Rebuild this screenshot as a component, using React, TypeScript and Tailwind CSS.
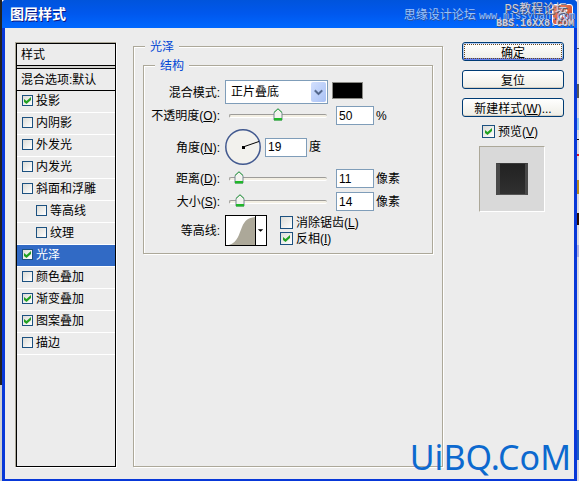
import { useState } from 'react'
import type { ReactNode } from 'react'
import { FaChevronDown } from 'react-icons/fa'

const styles = [
  { name: '投影', on: true },
  { name: '内阴影', on: false },
  { name: '外发光', on: false },
  { name: '内发光', on: false },
  { name: '斜面和浮雕', on: false },
  { name: '等高线', on: false, sub: true },
  { name: '纹理', on: false, sub: true },
  { name: '光泽', on: true },
  { name: '颜色叠加', on: false },
  { name: '渐变叠加', on: true },
  { name: '图案叠加', on: true },
  { name: '描边', on: false },
]

const groupBox =
  'min-w-0 border border-[#aca899] shadow-[1px_1px_0_#fff,inset_1px_1px_0_#fff]'
const legendText = 'h-[14px] bg-[#ececec] px-[5px] leading-[17px] text-[#0046d5]'

function CheckBox({ id, checked, onChange, small }: { id: string; checked: boolean; onChange: () => void; small?: boolean }) {
  return (
    <span className={small ? 'relative block size-[11px] shrink-0' : 'relative block size-[13px] shrink-0'}>
      <input
        type="checkbox"
        id={id}
        checked={checked}
        onChange={onChange}
        className="block size-full appearance-none border border-[#1c5180] bg-linear-to-br from-[#dcdcd7] to-white"
      />
      {checked && (
        <svg className="pointer-events-none absolute inset-0 m-auto size-[7px]" viewBox="0 0 7 7">
          <path d="M0 2v3l2.500 2L7 3V0L2.500 4z" fill="#21a121" />
        </svg>
      )}
    </span>
  )
}

function Row({ id, label, hotkey, className, children }: { id: string; label: string; hotkey?: string; className: string; children: ReactNode }) {
  return (
    <div className={`flex items-center ${className}`}>
      <label htmlFor={id} className="mr-[5px] w-[76px] shrink-0 pt-px text-right whitespace-nowrap">
        {label}
        {hotkey && <>(<u>{hotkey}</u>)</>}:
      </label>
      {children}
    </div>
  )
}

function NumberBox({ id, value, onChange }: { id: string; value: number; onChange: (v: number) => void }) {
  return (
    <input
      type="text"
      id={id}
      value={value}
      onChange={(e) => onChange(Number(e.target.value) || 0)}
      className="h-[19px] w-[38px] shrink-0 border border-[#7f9db9] bg-white px-[2px]"
    />
  )
}

function Slider({ label, value, max, onChange }: { label: string; value: number; max: number; onChange: (v: number) => void }) {
  return (
    <div className="relative ml-[4px] mr-[9px] h-[13px] w-[98px] shrink-0">
      <div className="mt-[5px] h-[4px] rounded-sm border-t border-l border-[#9d9c99] border-b border-b-white bg-[#f3efe3]" />
      <input
        type="range"
        aria-label={label}
        min={0}
        max={max}
        value={value}
        onChange={(e) => onChange(Number(e.target.value))}
        className="absolute inset-0 w-full opacity-0"
      />
      <div className="pointer-events-none absolute inset-x-[5px] -top-px">
        <svg
          className="-ml-[5px] h-[13px] w-[10px]"
          style={{ position: 'relative', left: `${(value / max) * 100}%` }}
          viewBox="0 0 10 13"
        >
          <path d="M1 12V4.500L5 .8l4 3.700V12z" fill="#f3f3ef" stroke="#778892" />
          <path d="M1 4.500 5 .8l4 3.700" fill="none" stroke="#37ac49" />
          <path d="M1 10h8v2.500H1z" fill="#21b62b" />
        </svg>
      </div>
    </div>
  )
}

function PushButton({ children, focused }: { children: ReactNode; focused?: boolean }) {
  return (
    <button
      type="button"
      className={
        focused
          ? 'h-[19px] w-full rounded-[3px] border border-[#003c74] bg-linear-to-b from-white to-[#eeede5] pt-[2px] shadow-[inset_0_-2px_0_#6982ee,inset_0_0_0_1px_#b5cdf5] outline-1 -outline-offset-3 outline-dotted outline-[#6b4a1c] leading-[16px]'
          : 'h-[19px] w-full rounded-[3px] border border-[#003c74] bg-linear-to-b from-white to-[#eeede5] pt-[2px] shadow-[inset_0_-1px_0_#d6d0c5] leading-[16px]'
      }
    >
      {children}
    </button>
  )
}

function StyleList() {
  const [items, setItems] = useState(styles)
  const toggle = (i: number) =>
    setItems(items.map((s, n) => (n === i ? { ...s, on: !s.on } : s)))

  return (
    <div className="w-[101px] shrink-0 border-t border-l border-[#aca899] shadow-[1px_1px_0_#fff]">
      <div className="h-full border border-black">
        <div className="h-[22px] border-b border-black pl-[4px] leading-[22px]">样式</div>
        <div className="h-[2px] bg-[#d0d0cc]" />
        <div className="h-[23px] border-y border-black pl-[4px] leading-[22px] whitespace-nowrap">混合选项:默认</div>
        <ul>
          {items.map((s, i) => (
            <li
              key={s.name}
              className={`flex h-[22px] items-center gap-[3px] border-b border-white pb-[2px] ${s.sub ? 'pl-[19px]' : 'pl-[5px]'} ${s.name === '光泽' ? 'bg-[#316ac5] text-white' : ''}`}
            >
              <CheckBox id={`style-${i}`} checked={s.on} onChange={() => toggle(i)} small />
              <label htmlFor={`style-${i}`} className="whitespace-nowrap">{s.name}</label>
            </li>
          ))}
        </ul>
      </div>
    </div>
  )
}

function SatinPanel() {
  const [opacity, setOpacity] = useState(50)
  const [angle, setAngle] = useState(19)
  const [distance, setDistance] = useState(11)
  const [size, setSize] = useState(14)
  const [antiAlias, setAntiAlias] = useState(false)
  const [invert, setInvert] = useState(true)
  const rad = (angle * Math.PI) / 180

  return (
    <fieldset className={`-mt-[3px] flex-1 px-[9px] ${groupBox}`}>
      <legend className={`ml-[2px] ${legendText}`}>光泽</legend>
      <fieldset className={`mt-[5px] pb-[7px] ${groupBox}`}>
        <legend className={`ml-[11px] ${legendText}`}>结构</legend>

        <Row id="blend" label="混合模式" className="mt-[8px] h-[24px]">
          <div className="relative mr-[4px] w-[103px] shrink-0">
            <select id="blend" className="block h-[24px] w-full appearance-none border border-[#7f9db9] bg-white pl-[5px]">
              <option>正片叠底</option>
              <option>正常</option>
              <option>滤色</option>
            </select>
            <span className="pointer-events-none absolute top-[2px] right-[2px] flex h-[20px] w-[15px] items-center justify-center rounded-xs bg-linear-to-br from-[#d3e0fd] to-[#a9c1f5]">
              <FaChevronDown className="size-[9px] stroke-[#4d6185] stroke-[40px] text-[#4d6185]" />
            </span>
          </div>
          <button type="button" aria-label="颜色" className="mb-[3px] h-[17px] w-[31px] shrink-0 border border-[#8a8a85] bg-black" />
        </Row>

        <Row id="opacity" label="不透明度" hotkey="O" className="mt-[2px] h-[19px]">
          <Slider label="不透明度" value={opacity} max={100} onChange={setOpacity} />
          <NumberBox id="opacity" value={opacity} onChange={setOpacity} />
          <span className="ml-[2px]">%</span>
        </Row>

        <Row id="angle" label="角度" hotkey="N" className="mt-[4px] h-[36px]">
          <svg className="mr-[4px] size-[36px] shrink-0" viewBox="0 0 36 36">
            <circle cx="18" cy="18" r="17.2" fill="#f2f1ed" stroke="#42598f" strokeWidth="1.5" />
            <line x1="18" y1="18" x2={18 + 17 * Math.cos(rad)} y2={18 - 17 * Math.sin(rad)} stroke="#000" />
            <rect x="17" y="17" width="3" height="3" />
          </svg>
          <input
            type="text"
            id="angle"
            value={angle}
            onChange={(e) => setAngle(Number(e.target.value) || 0)}
            className="h-[19px] w-[42px] shrink-0 border border-[#7f9db9] bg-white px-[2px]"
          />
          <span className="ml-[2px]">度</span>
        </Row>

        <Row id="distance" label="距离" hotkey="D" className="mt-[4px] h-[19px]">
          <Slider label="距离" value={distance} max={180} onChange={setDistance} />
          <NumberBox id="distance" value={distance} onChange={setDistance} />
          <span className="ml-[2px]">像素</span>
        </Row>

        <Row id="size" label="大小" hotkey="S" className="mt-[4px] h-[19px]">
          <Slider label="大小" value={size} max={200} onChange={setSize} />
          <NumberBox id="size" value={size} onChange={setSize} />
          <span className="ml-[2px]">像素</span>
        </Row>

        <Row id="contour" label="等高线" className="mt-[4px] h-[31px]">
          <button type="button" id="contour" className="flex h-[31px] w-[42px] shrink-0 border border-black bg-white">
            <svg className="h-[29px] w-[29px]" viewBox="0 0 29 29">
              <path d="M3 29C12 26 13 18 16 11C19 4 22 2 29 1V29z" fill="#aca899" />
            </svg>
            <svg className="h-[29px] w-[11px] border-l border-black" viewBox="0 0 11 29">
              <path d="M2 13h6L5 16z" />
            </svg>
          </button>
          <div className="ml-[13px] flex flex-col gap-[3px] leading-[13px]">
            <div className="flex h-[13px] items-center gap-[3px]">
              <CheckBox id="antialias" checked={antiAlias} onChange={() => setAntiAlias(!antiAlias)} />
              <label htmlFor="antialias" className="pt-[2px] whitespace-nowrap">消除锯齿(<u>L</u>)</label>
            </div>
            <div className="flex h-[13px] items-center gap-[3px]">
              <CheckBox id="invert" checked={invert} onChange={() => setInvert(!invert)} />
              <label htmlFor="invert" className="pt-[2px]">反相(<u>I</u>)</label>
            </div>
          </div>
        </Row>
      </fieldset>
    </fieldset>
  )
}

function Actions() {
  const [preview, setPreview] = useState(true)

  return (
    <div className="flex w-[102px] shrink-0 flex-col gap-[9px]">
      <PushButton focused>确定</PushButton>
      <PushButton>复位</PushButton>
      <PushButton>新建样式(<u>W</u>)...</PushButton>
      <div className="-mt-[2px] flex h-[14px] items-center gap-[3px] pl-[20px] leading-[14px]">
        <CheckBox id="preview" checked={preview} onChange={() => setPreview(!preview)} />
        <label htmlFor="preview" className="pt-[2px]">预览(<u>V</u>)</label>
      </div>
      <div className="-mt-px ml-[17px] flex size-[66px] items-center justify-center border border-[#aca899] border-r-white border-b-white bg-[#d9d9d9]">
        <div className="size-[32px] border border-t-[#3a3a3a] border-r-3 border-r-[#484848] border-b-[#555] border-l-4 border-l-[#484848] bg-linear-to-b from-[#222] to-[#303030]" />
      </div>
    </div>
  )
}

export default function App() {
  return (
    <div className="relative flex h-screen overflow-hidden font-['Liberation_Sans','Noto_Sans_CJK_SC',sans-serif] text-[12px] leading-[16px] text-black">
      {/* Desktop showing left of the dialog */}
      <div className="flex w-[2px] shrink-0 flex-col">
        <div className="h-4/5 bg-[#222]" />
        <div className="flex-1 bg-[#d0d0d0]" />
      </div>

      <div className="flex min-w-0 flex-1 flex-col rounded-t-[4px] border-x-3 border-b-2 border-[#0838d8] bg-[#ececec]">
        {/* Title bar */}
        <header className="-mx-[3px] flex h-[28px] shrink-0 items-center justify-between rounded-t-[4px] bg-linear-to-b from-[#0054dc] via-[#0058ee] to-[#0068ff] pr-[4px] pl-[8px]">
          <h1 className="text-[14px] font-bold text-white [text-shadow:1px_1px_0_#0a1883]">图层样式</h1>
          <button type="button" aria-label="关闭" className="size-[21px] rounded-[3px] border border-white bg-linear-to-br from-[#ea8a6c] to-[#c83a10]">
            <svg viewBox="0 0 19 19">
              <path d="M5 5l9 9M14 5l-9 9" stroke="#fff" strokeWidth="2" />
            </svg>
          </button>
        </header>

        <main className="flex flex-1 pt-[14px] pr-[10px] pb-[12px] pl-[10px]">
          <StyleList />
          <div className="flex min-w-0 flex-1 pr-[19px] pl-[17px]">
            <SatinPanel />
          </div>
          <Actions />
        </main>
      </div>

      {/* Desktop showing right of the dialog */}
      <div className="flex w-[2px] shrink-0 flex-col bg-[#dcdae2]">
        <div className="mt-[48px] h-[1px] bg-[#555]" />
        <div className="mt-[35px] h-[14px] bg-[#555]" />
        <div className="mt-[20px] h-[12px] bg-[#8cc4f5]" />
        <div className="mt-[9px] h-[1px] bg-black" />
        <div className="mt-[14px] h-[2px] bg-[#e01020]" />
        <div className="mt-[24px] h-[14px] bg-[#b88a20]" />
        <div className="mt-[19px] h-[12px] bg-[#2a0a00]" />
        <div className="mt-[20px] h-[12px] bg-[#b0b0e0]" />
        <div className="mt-[173px] h-[30px] bg-[#2060c8]" />
      </div>

      {/* Watermarks */}
      <div className="pointer-events-none absolute top-[7px] right-[4px] whitespace-nowrap text-[#9cc2fa] [text-shadow:1px_1px_0_#31559c]">
        思缘设计论坛 <span className="font-['Liberation_Mono',monospace] text-[10px]">www.missyuan.com</span>
      </div>
      <div className="pointer-events-none absolute top-[4px] right-[5px] text-right font-['Liberation_Mono','Noto_Sans_CJK_SC',monospace] text-[10px] leading-[13px] text-[#d0d0dc] [text-shadow:1px_1px_0_#555c78]">
        <p className="pr-[7px] text-[12px]">PS教程论坛</p>
        <p className="font-bold">BBS.16XX8.COM</p>
      </div>
      <div className="pointer-events-none absolute right-[8px] bottom-[4px] font-['Noto_Sans',sans-serif] text-[34px] leading-[40px] text-[#0c69cf]">
        UiBQ.CoM
      </div>
    </div>
  )
}
